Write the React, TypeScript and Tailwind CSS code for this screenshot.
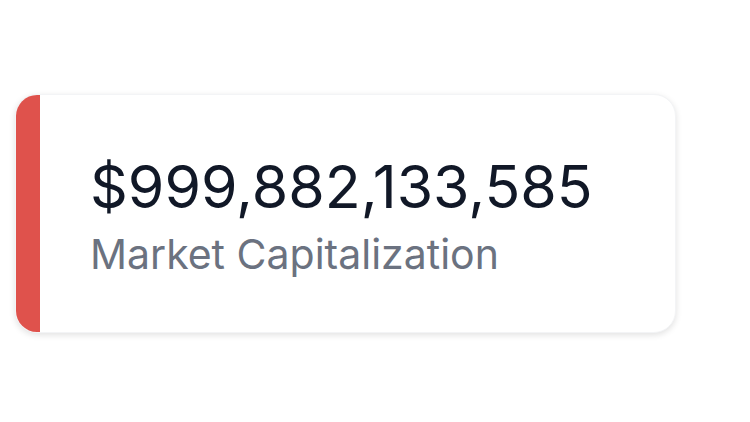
import React from 'react';

const StatCard: React.FC<{ value: string; label: string }> = ({ value, label }) => {
  return (
    <div className="flex w-[661px] h-[239px] rounded-[22px] bg-white overflow-hidden shadow-[0_2px_6px_rgba(0,0,0,0.12)] border border-gray-100">
      <div className="w-[24px] bg-[#df524c]" />
      <div className="flex flex-col justify-center pl-[50px] pt-[4px]">
        <div className="text-[59px] leading-none text-[#111827]">{value}</div>
        <div className="mt-[18px] text-[41px] leading-none text-[#6b7280]">{label}</div>
      </div>
    </div>
  );
};

export default function App() {
  return (
    <div className="w-[750px] h-[422px] bg-white pt-[94px] pl-[15px]" style={{ fontFamily: 'Inter, "Noto Sans", sans-serif' }}>
      <StatCard value="$999,882,133,585" label="Market Capitalization" />
    </div>
  );
}
